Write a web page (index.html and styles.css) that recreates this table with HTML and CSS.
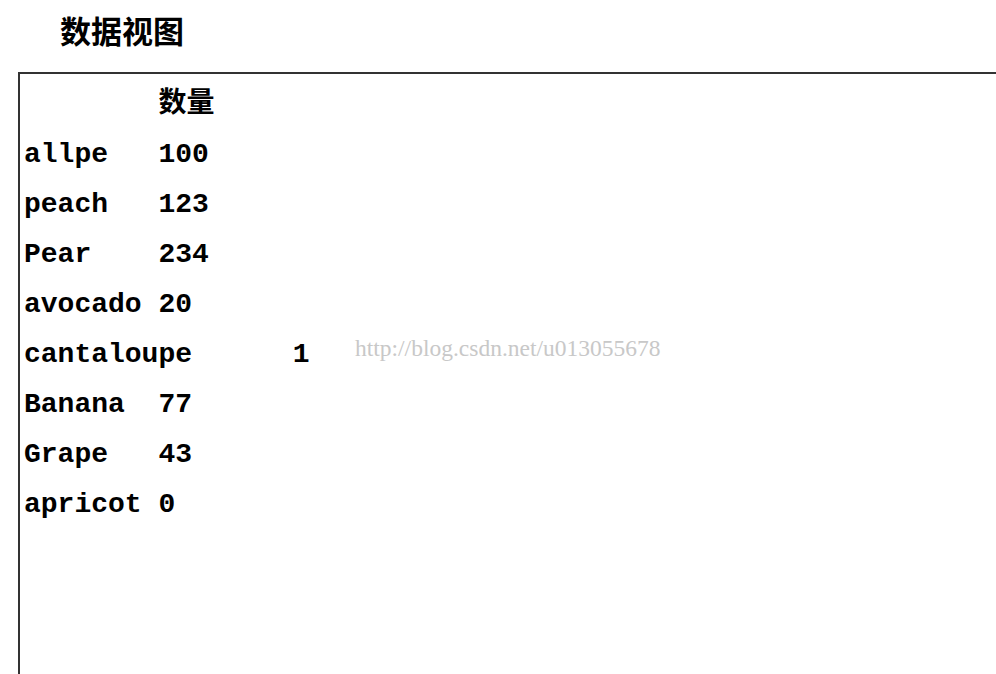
FILE: index.html
```html
<!DOCTYPE html>
<html lang="zh-CN">
<head>
  <meta charset="UTF-8">
  <title>数据视图</title>
  <link rel="stylesheet" href="styles.css">
</head>
<body>
  <h1 class="titulo">数据视图</h1>
  <div class="quadro">
<pre class="dados">	数量
allpe	100
peach	123
Pear	234
avocado	20
cantaloupe	1
Banana	77
Grape	43
apricot	0</pre>
    <span class="marca">http://blog.csdn.net/u013055678</span>
  </div>
</body>
</html>
```

FILE: styles.css
```css
* {
  margin: 0;
  padding: 0;
  box-sizing: border-box;
}

body {
  background: #fff;
  color: #000;
  overflow: hidden;
  width: 996px;
  height: 674px;
}

.titulo {
  font-family: "Noto Sans CJK SC", sans-serif;
  font-size: 31px;
  font-weight: bold;
  line-height: 31px;
  margin: 14px 0 27px 60px;
}

/* caixa cortada pela borda da janela: sem borda direita e inferior */
.quadro {
  position: relative;
  margin-left: 18px;
  width: 978px;
  height: 602px;
  border: 2px solid #333;
  border-right: none;
  border-bottom: none;
  padding: 6px 0 0 4px;
}

.dados {
  font-family: "Liberation Mono", "Noto Sans CJK SC", monospace;
  font-size: 28px;
  font-weight: bold;
  line-height: 50px;
  tab-size: 8;
}

.marca {
  position: absolute;
  left: 335px;
  top: 261px;
  font-family: "Liberation Serif", serif;
  font-size: 23.5px;
  color: #c8c8c8;
}
```
